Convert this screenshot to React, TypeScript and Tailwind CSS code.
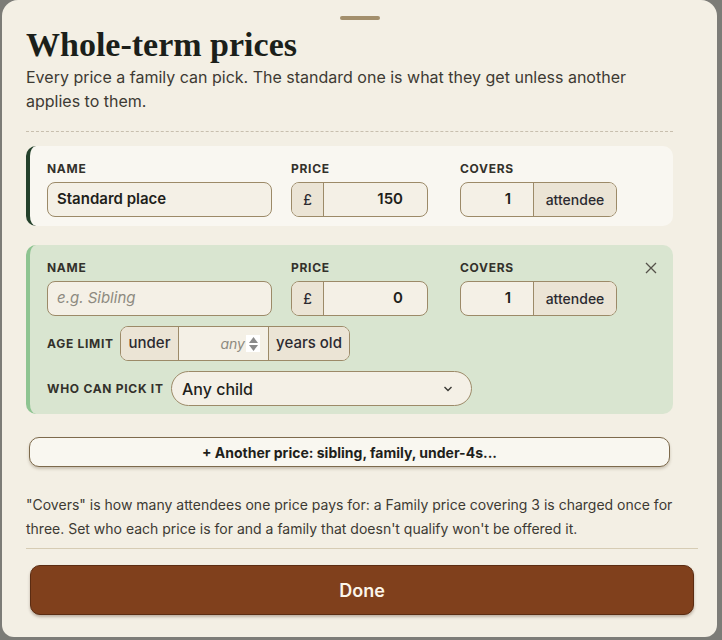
import React from 'react';

const labelCls = "text-[12px] leading-4 font-bold uppercase tracking-[0.06em] text-[#33312b]";
const boxCls = "h-[35px] rounded-lg border border-[#9c8a68] bg-[#f4f0e6] overflow-hidden flex items-stretch";
const fieldCls = "h-[35px] rounded-lg border border-[#9c8a68] bg-[#f4f0e6] overflow-hidden flex items-center px-[9px]";
const addonCls = "flex items-center justify-center bg-[#ebe4d5] text-[14px] font-medium text-[#2b2a30]";

function PriceRow({ name, placeholder, price }: { name?: string; placeholder?: string; price: string }) {
    return (
        <div className="flex items-start">
            <div className="flex flex-col gap-[5px] w-[225px]">
                <span className={labelCls}>Name</span>
                <div className={fieldCls}>
                    {name ? (
                        <span className="text-[15px] font-semibold text-[#1f1f1b]">{name}</span>
                    ) : (
                        <span className="text-[15px] italic text-[#8d8a80]">{placeholder}</span>
                    )}
                </div>
            </div>
            <div className="flex flex-col gap-[5px] w-[137px] ml-[19px]">
                <span className={labelCls}>Price</span>
                <div className={boxCls}>
                    <span className={`${addonCls} w-[32px] border-r border-[#9c8a68] font-bold`}>£</span>
                    <span className="flex-1 flex items-center justify-end pr-6 text-[15px] font-semibold text-[#1f1f1b]">{price}</span>
                </div>
            </div>
            <div className="flex flex-col gap-[5px] w-[157px] ml-[32px]">
                <span className={labelCls}>Covers</span>
                <div className={boxCls}>
                    <span className="w-[73px] flex items-center justify-end pr-[22px] text-[15px] font-semibold text-[#1f1f1b] border-r border-[#9c8a68]">1</span>
                    <span className={`${addonCls} flex-1`}>attendee</span>
                </div>
            </div>
        </div>
    );
}

export default function App() {
    return (
        <div className="h-[640px] bg-[#7c7c77] overflow-hidden font-['Inter',sans-serif]">
            <div className="ml-[2px] w-[715px] h-[637px] bg-[#f3efe4] rounded-t-2xl rounded-b-xl flex flex-col">
                {/* drag handle */}
                <div className="pt-4 flex justify-center">
                    <div className="w-10 h-1 rounded-full bg-[#a38f6c]" />
                </div>

                <div className="pl-6 w-[671px] flex-1 overflow-hidden">
                    <h1 className="mt-[7px] font-['Liberation_Serif',serif] font-bold text-[34px] leading-[36px] text-[#1b1f1a]">
                        Whole-term prices
                    </h1>
                    <p className="mt-[2px] text-[16px] leading-6 text-[#3d3a33]">
                        Every price a family can pick. The standard one is what they get unless another applies to them.
                    </p>
                    <div className="mt-[18px] border-t border-dashed border-[#c8bfae]" />

                    {/* standard price */}
                    <div className="mt-[14px] rounded-[10px] bg-[#f9f7f1] border-l-4 border-[#23402a] pl-[17px] pt-[15px] pb-[9px]">
                        <PriceRow name="Standard place" price="150" />
                    </div>

                    {/* extra price */}
                    <div className="relative mt-[19px] rounded-[10px] bg-[#d9e5d0] border-l-4 border-[#8ec491] pl-[17px] pt-[15px] pb-[8px]">
                        <button className="absolute right-[16px] top-[17px] text-[#55524a]">
                            <svg width="12" height="12" viewBox="0 0 12 12" fill="none" stroke="currentColor" strokeWidth="1.3">
                                <path d="M1 1l10 10M11 1L1 11" />
                            </svg>
                        </button>
                        <PriceRow placeholder="e.g. Sibling" price="0" />

                        <div className="mt-[10px] flex items-center">
                            <span className={`${labelCls} w-[73px]`}>Age limit</span>
                            <div className="h-[35px] rounded-lg border border-[#9c8a68] bg-[#f4f0e6] overflow-hidden flex items-stretch">
                                <span className={`${addonCls} w-[58px] text-[15px] border-r border-[#9c8a68]`}>under</span>
                                <span className="w-[89px] flex items-center justify-end pr-[8px] gap-[1px]">
                                    <span className="text-[14px] italic text-[#8d8a80]">any</span>
                                    <span className="w-[14px] h-[17px] bg-white flex flex-col items-center justify-center gap-[2px]">
                                        <svg width="9" height="6" viewBox="0 0 9 6"><path d="M4.5 0L9 6H0z" fill="#8a8a8a" /></svg>
                                        <svg width="9" height="6" viewBox="0 0 9 6"><path d="M0 0h9L4.5 6z" fill="#8a8a8a" /></svg>
                                    </span>
                                </span>
                                <span className={`${addonCls} w-[81px] text-[15px] border-l border-[#9c8a68]`}>years old</span>
                            </div>
                        </div>

                        <div className="mt-[10px] flex items-center">
                            <span className={`${labelCls} w-[124px]`}>Who can pick it</span>
                            <div className="h-[35px] w-[301px] rounded-full border border-[#9c8a68] bg-[#f4f0e6] flex items-center justify-between pl-[10px] pr-[18px]">
                                <span className="text-[16px] font-medium text-[#1f1f1b]">Any child</span>
                                <svg width="10" height="6" viewBox="0 0 10 6" fill="none" stroke="#3a3a35" strokeWidth="1.4">
                                    <path d="M1.5 1l3.5 3.5L8.5 1" />
                                </svg>
                            </div>
                        </div>
                    </div>

                    <button className="mt-[23px] mx-[3px] w-[641px] h-[30px] rounded-[10px] border-[1.5px] border-[#7d6a4c] bg-[#f9f7f0] shadow-[0_2px_3px_rgba(80,60,30,0.25)] text-[14px] font-bold text-[#1f1f1b]">
                        + Another price: sibling, family, under-4s...
                    </button>

                    <p className="mt-[26px] text-[14px] leading-6 text-[#3d3a33]">
                        "Covers" is how many attendees one price pays for: a Family price covering 3 is charged once for three. Set who each price is for and a family that doesn't qualify won't be offered it.
                    </p>
                </div>

                {/* footer */}
                <div className="ml-6 w-[672px] border-t border-[#d6ccb4] pt-4 pb-[22px]">
                    <button className="ml-1 w-[664px] h-[50px] rounded-[10px] bg-[#80401c] border border-[#5b2c12] shadow-[0_2px_3px_rgba(60,30,10,0.3)] text-[18px] font-semibold text-[#fbf5ea]">
                        Done
                    </button>
                </div>
            </div>
        </div>
    );
}
